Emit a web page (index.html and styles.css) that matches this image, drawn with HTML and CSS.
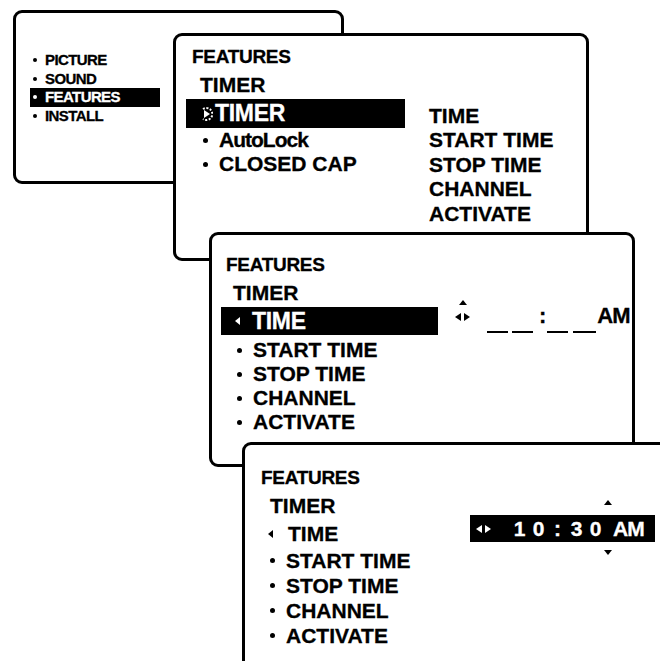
FILE: index.html
```html
<!DOCTYPE html>
<html lang="en">
<head>
    <meta charset="UTF-8">
    <meta name="viewport" content="width=device-width, initial-scale=1.0">
    <title>Features - Timer</title>
    <link rel="stylesheet" href="styles.css">
</head>
<body>

<!-- main menu -->
<div class="panel p1">
    <ul class="mainmenu">
        <li><span class="dot"></span>PICTURE</li>
        <li><span class="dot"></span>SOUND</li>
        <li class="sel"><span class="dot"></span>FEATURES</li>
        <li><span class="dot"></span>INSTALL</li>
    </ul>
</div>

<!-- features menu -->
<div class="panel p2">
    <div class="title">FEATURES</div>
    <div class="sub">TIMER</div>
    <div class="body">
        <ul class="menu">
            <li class="sel">
                <svg class="clock" width="13" height="20" viewBox="0 0 13 20">
                    <path d="M3 5 A6 6 0 1 1 3 15" fill="none" stroke="#fff" stroke-width="2" stroke-dasharray="2 1.5"/>
                    <polygon points="4,6 10,10 4,14" fill="#fff"/>
                </svg>TIMER
            </li>
            <li><span class="dot"></span><span class="tight">AutoLock</span></li>
            <li><span class="dot"></span>CLOSED CAP</li>
        </ul>
        <ul class="sublist">
            <li>TIME</li>
            <li>START TIME</li>
            <li>STOP TIME</li>
            <li>CHANNEL</li>
            <li>ACTIVATE</li>
        </ul>
    </div>
</div>

<!-- timer menu, time not set -->
<div class="panel p3">
    <div class="title">FEATURES</div>
    <div class="sub">TIMER</div>
    <div class="body">
        <ul class="menu">
            <li class="sel"><span class="tri-l"></span>TIME</li>
            <li><span class="dot"></span>START TIME</li>
            <li><span class="dot"></span>STOP TIME</li>
            <li><span class="dot"></span>CHANNEL</li>
            <li><span class="dot"></span>ACTIVATE</li>
        </ul>
        <div class="setter">
            <div class="arrows">
                <span class="tri-up"></span>
                <svg class="lr" width="16" height="8" viewBox="0 0 16 8">
                    <polygon points="0,4 6,0 6,8"/>
                    <polygon points="9,0 15,4 9,8"/>
                </svg>
            </div>
            <div class="digits">
                <span class="blank first"></span>
                <span class="blank"></span>
                <span class="colon">:</span>
                <span class="blank third"></span>
                <span class="blank wide"></span>
                <span class="ampm">AM</span>
            </div>
        </div>
    </div>
</div>

<!-- timer menu, time set -->
<div class="panel p4">
    <div class="title">FEATURES</div>
    <div class="sub">TIMER</div>
    <div class="body">
        <ul class="menu">
            <li class="cur"><span class="tri-l"></span>TIME</li>
            <li><span class="dot"></span>START TIME</li>
            <li><span class="dot"></span>STOP TIME</li>
            <li><span class="dot"></span>CHANNEL</li>
            <li><span class="dot"></span>ACTIVATE</li>
        </ul>
        <div class="setter">
            <span class="tri-up"></span>
            <div class="timebar">
                <svg class="lr" width="16" height="8" viewBox="0 0 16 8">
                    <polygon points="0,4 6,0 6,8"/>
                    <polygon points="9,0 15,4 9,8"/>
                </svg>
                <span class="cell">1</span><span class="cell">0</span><span class="cell">:</span><span class="cell">3</span><span class="cell">0</span>
                <span class="ampm">AM</span>
            </div>
            <span class="tri-down"></span>
        </div>
    </div>
</div>

</body>
</html>
```

FILE: styles.css
```css
body {
    margin: 0;
    width: 660px;
    height: 661px;
    overflow: hidden;
    position: relative;
    background: #fff;
    color: #000;
    font-family: "Liberation Sans", Arial, sans-serif;
    font-weight: bold;
    -webkit-text-stroke: 0.3px currentColor;
}

ul {
    list-style: none;
    margin: 0;
    padding: 0;
}

/* the four screens are stacked like windows */
.panel {
    position: absolute;
    box-sizing: border-box;
    border: 3px solid #000;
    border-radius: 9px;
    background: #fff;
}

.p1 { left: 13px; top: 10px; width: 331px; height: 174px; padding-top: 38px; }
.p2 { left: 173px; top: 33px; width: 416px; height: 228px; padding-top: 7px; }
.p3 { left: 209px; top: 232px; width: 426px; height: 235px; padding-top: 16px; }
.p4 { left: 242px; top: 442px; width: 440px; height: 240px; padding-top: 19px; }

.dot {
    display: inline-block;
    width: 5px;
    height: 5px;
    border-radius: 50%;
    background: currentColor;
    margin-right: 11px;
    flex: none;
}

.tri-l {
    display: inline-block;
    width: 0;
    height: 0;
    border-top: 4px solid transparent;
    border-bottom: 4px solid transparent;
    border-right: 5px solid currentColor;
    flex: none;
}

.tri-up, .tri-down {
    display: block;
    width: 0;
    height: 0;
    border-left: 4px solid transparent;
    border-right: 4px solid transparent;
}
.tri-up { border-bottom: 5px solid #000; }
.tri-down { border-top: 5px solid #000; }

.lr { display: block; fill: currentColor; flex: none; }

/* main menu */
.mainmenu {
    margin-left: 14px;
    width: 130px;
    font-size: 15px;
    letter-spacing: -0.6px;
}

.mainmenu li {
    display: flex;
    align-items: center;
    height: 18.5px;
    line-height: 18.5px;
    padding-left: 3px;
}

.mainmenu .dot {
    width: 4px;
    height: 4px;
    margin-right: 8px;
}

.mainmenu .sel {
    background: #000;
    color: #fff;
}

/* sub screens */
.title {
    font-size: 19px;
    line-height: 28px;
    letter-spacing: -0.3px;
    margin-left: 16px;
}

.sub {
    font-size: 21px;
    line-height: 28px;
    margin-left: 24px;
}

.body {
    display: flex;
    align-items: flex-start;
}

.menu li {
    display: flex;
    align-items: center;
    font-size: 21px;
    height: 24px;
    line-height: 24px;
}

.menu .sel {
    background: #000;
    color: #fff;
    font-size: 23px;
    letter-spacing: -0.3px;
}

.tight { letter-spacing: -1px; }

/* features */
.p2 .menu { margin-left: 10px; width: 219px; }
.p2 .menu li { padding-left: 17px; }
.p2 .menu .sel { height: 29px; line-height: 29px; padding-left: 14px; }
.p2 .clock { display: block; margin-right: 2px; }

.sublist {
    margin-left: 24px;
    padding-top: 4.5px;
    font-size: 21px;
}

.sublist li {
    height: 24.5px;
    line-height: 24.5px;
}

/* timer, unset */
.p3 .title { margin-left: 14px; }
.p3 .sub { margin-left: 21px; }
.p3 .menu { margin-left: 9px; width: 217px; }
.p3 .menu li { padding-left: 16px; }
.p3 .menu .sel { height: 28px; line-height: 28px; padding-left: 14px; margin-bottom: 3px; }
.p3 .menu .sel .tri-l { margin-right: 12px; }

.p3 .setter {
    display: flex;
    align-items: flex-start;
    margin-left: 17px;
    margin-top: -8px;
}

.arrows {
    display: flex;
    flex-direction: column;
    align-items: center;
    width: 16px;
}

.arrows .tri-up { margin-top: 1px; }
.arrows .lr { margin-top: 8px; }

.digits {
    display: flex;
    align-items: flex-start;
    font-size: 22px;
    line-height: 28px;
}

.blank {
    display: block;
    width: 21px;
    height: 2px;
    background: #000;
    margin-top: 32px;
    margin-left: 4px;
}

.blank.first { margin-left: 16px; }
.blank.third { margin-left: 1px; }
.blank.wide { width: 23px; margin-left: 5px; }

.colon { margin-top: 3px; margin-left: 6px; }
.digits .ampm { margin-top: 3px; margin-left: 1px; letter-spacing: -1px; }

/* timer, set */
.p4 .sub { margin-left: 25px; }
.p4 .menu { width: 200px; }
.p4 .menu li { height: 25px; line-height: 25px; padding-left: 25px; }
.p4 .menu .cur { height: 28px; line-height: 28px; padding-left: 23px; }
.p4 .menu .cur .tri-l { margin-right: 15px; }

.p4 .setter {
    display: flex;
    flex-direction: column;
    margin-left: 25px;
    margin-top: -20px;
}

.p4 .setter .tri-up,
.p4 .setter .tri-down { margin-left: 134px; }

.timebar {
    display: flex;
    align-items: center;
    width: 185px;
    height: 27px;
    margin: 10px 0 8px;
    background: #000;
    color: #fff;
    font-size: 21px;
}

.timebar .lr { margin-left: 6px; margin-right: 18px; }

.cell {
    display: inline-block;
    width: 19px;
    text-align: center;
}

.timebar .ampm { margin-left: 8px; letter-spacing: -1px; }
```
